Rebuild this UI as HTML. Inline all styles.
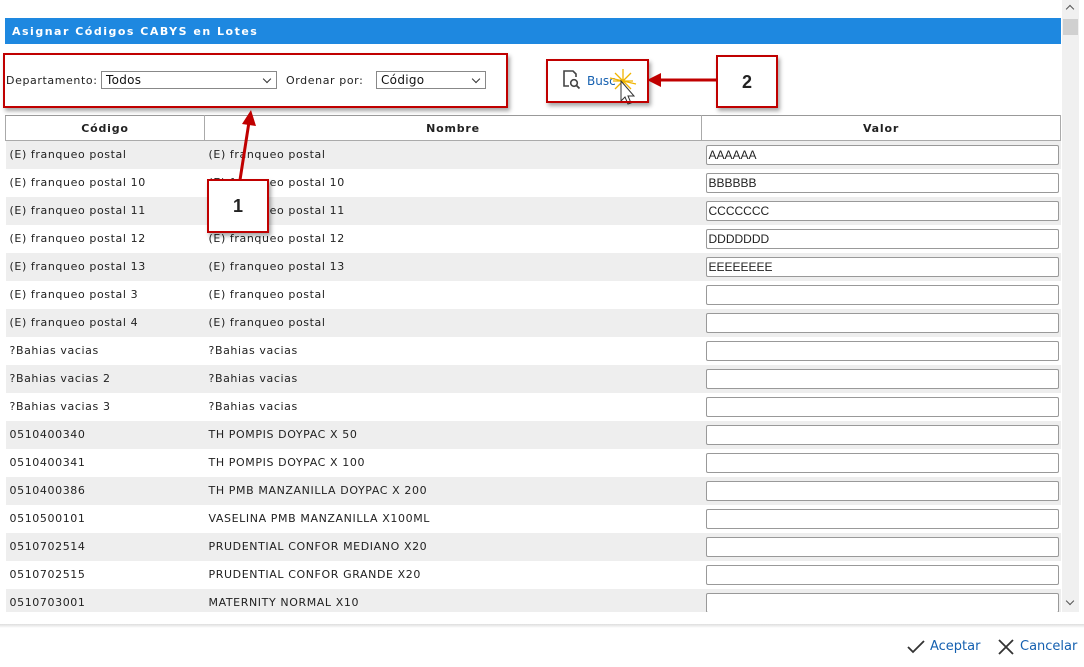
<!DOCTYPE html>
<html><head><meta charset="utf-8"><style>
body{margin:0;width:1084px;height:667px;background:#fff;font-family:"DejaVu Sans","Liberation Sans",sans-serif;font-size:11px;letter-spacing:.6px;color:#222;position:relative;overflow:hidden}
.abs{position:absolute}
.hdr{left:5px;top:18px;width:1056px;height:26px;background:#1e88e0;color:#fff;font-weight:bold;font-size:11px;letter-spacing:1.5px;line-height:27px;padding-left:7px;box-sizing:border-box}
.sel{border:1px solid #888;background:#fff;height:18px;box-sizing:border-box;font-size:12px;letter-spacing:.3px;line-height:17px;padding-left:4px;color:#111}
.sel:after{content:"";position:absolute;right:6px;top:4px;width:5px;height:5px;border-right:1.5px solid #333;border-bottom:1.5px solid #333;transform:rotate(45deg)}
table{position:absolute;left:5px;top:115px;border-collapse:collapse;width:1056px;table-layout:fixed}
th{height:24px;border:1px solid #aaa;border-top:1px solid #999;font-weight:bold;font-size:11px;letter-spacing:.8px;padding:0;background:#fff}
td{height:27px;padding:0 0 1px 4px;white-space:nowrap;overflow:hidden}
tr.g td{background:#eee}
.inp{width:353px;height:20px;border:1px solid #999;border-radius:2px;background:#fff;box-sizing:border-box;font-size:12px;letter-spacing:0;line-height:18px;padding-left:2px;font-family:"Liberation Sans",sans-serif}
.red{border:2px solid #c00000;box-shadow:2px 3px 4px rgba(0,0,0,.35);background:transparent}
.nb{background:#fff;font-family:"Liberation Sans",sans-serif;font-weight:bold;font-size:18px;text-align:center;letter-spacing:0}
</style></head><body>
<div class="abs" style="left:1062px;top:0;width:17px;height:612px;background:#f0f0f0"></div>
<div class="abs" style="left:1063px;top:19px;width:15px;height:16px;background:#d0d0d0"></div>
<div class="abs" style="left:1067px;top:6px;width:5px;height:5px;border-left:1.5px solid #555;border-top:1.5px solid #555;transform:rotate(45deg)"></div>
<div class="abs" style="left:1067px;top:598px;width:5px;height:5px;border-right:1.5px solid #555;border-bottom:1.5px solid #555;transform:rotate(45deg)"></div>
<div class="abs hdr">Asignar Códigos CABYS en Lotes</div>
<div class="abs" style="left:6px;top:74px;font-size:11px">Departamento:</div>
<div class="abs sel" style="left:101px;top:71px;width:176px">Todos</div>
<div class="abs" style="left:286px;top:74px;font-size:11px">Ordenar por:</div>
<div class="abs sel" style="left:376px;top:71px;width:110px">Código</div>
<div class="abs red" style="left:3px;top:53px;width:501px;height:51px"></div>
<svg class="abs" style="left:562px;top:69px" width="22" height="22" viewBox="0 0 22 22"><path d="M7 17H2V2h9l3 3v3" fill="none" stroke="#444" stroke-width="1.6"/><circle cx="12" cy="14" r="3.3" fill="none" stroke="#444" stroke-width="1.6"/><path d="M14.5 16.5l3 3" stroke="#444" stroke-width="1.8"/></svg>
<div class="abs" style="left:587px;top:74px;color:#1560b0;font-size:12px;letter-spacing:0">Busc</div>
<svg class="abs" style="left:605px;top:66px" width="40" height="46"><g stroke="#f0b400" stroke-width="1.3"><path d="M8 15L28 15M18 3L18 27M10 7L26 23M26 7L10 23M5 12L31 18"/></g><path d="M16 15v20l4-4 3 7 3-1-3-7 6 0z" fill="#fff" stroke="#333"/></svg>
<div class="abs red" style="left:546px;top:59px;width:99px;height:40px"></div>
<table>
<colgroup><col style="width:199px"><col style="width:497px"><col></colgroup>
<tr><th>Código</th><th>Nombre</th><th>Valor</th></tr>
<tr class="g"><td>(E) franqueo postal</td><td>(E) franqueo postal</td><td><div class="inp">AAAAAA</div></td></tr>
<tr><td>(E) franqueo postal 10</td><td>(E) franqueo postal 10</td><td><div class="inp">BBBBBB</div></td></tr>
<tr class="g"><td>(E) franqueo postal 11</td><td>(E) franqueo postal 11</td><td><div class="inp">CCCCCCC</div></td></tr>
<tr><td>(E) franqueo postal 12</td><td>(E) franqueo postal 12</td><td><div class="inp">DDDDDDD</div></td></tr>
<tr class="g"><td>(E) franqueo postal 13</td><td>(E) franqueo postal 13</td><td><div class="inp">EEEEEEEE</div></td></tr>
<tr><td>(E) franqueo postal 3</td><td>(E) franqueo postal</td><td><div class="inp"></div></td></tr>
<tr class="g"><td>(E) franqueo postal 4</td><td>(E) franqueo postal</td><td><div class="inp"></div></td></tr>
<tr><td>?Bahias vacias</td><td>?Bahias vacias</td><td><div class="inp"></div></td></tr>
<tr class="g"><td>?Bahias vacias 2</td><td>?Bahias vacias</td><td><div class="inp"></div></td></tr>
<tr><td>?Bahias vacias 3</td><td>?Bahias vacias</td><td><div class="inp"></div></td></tr>
<tr class="g"><td>0510400340</td><td>TH POMPIS DOYPAC X 50</td><td><div class="inp"></div></td></tr>
<tr><td>0510400341</td><td>TH POMPIS DOYPAC X 100</td><td><div class="inp"></div></td></tr>
<tr class="g"><td>0510400386</td><td>TH PMB MANZANILLA DOYPAC X 200</td><td><div class="inp"></div></td></tr>
<tr><td>0510500101</td><td>VASELINA PMB MANZANILLA X100ML</td><td><div class="inp"></div></td></tr>
<tr class="g"><td>0510702514</td><td>PRUDENTIAL CONFOR MEDIANO X20</td><td><div class="inp"></div></td></tr>
<tr><td>0510702515</td><td>PRUDENTIAL CONFOR GRANDE X20</td><td><div class="inp"></div></td></tr>
<tr class="g"><td>0510703001</td><td>MATERNITY NORMAL X10</td><td><div class="inp"></div></td></tr>
</table>
<div class="abs" style="left:0;top:612px;width:1084px;height:55px;background:#fff"></div>
<div class="abs" style="left:0;top:624px;width:1084px;height:4px;background:linear-gradient(#ddd,#fff)"></div>
<svg class="abs" style="left:906px;top:639px" width="20" height="16"><path d="M2 8l5 5 11-11" fill="none" stroke="#333" stroke-width="1.8"/></svg>
<div class="abs" style="left:930px;top:639px;color:#1560b0;font-size:13px;letter-spacing:0">Aceptar</div>
<svg class="abs" style="left:997px;top:638px" width="18" height="18"><path d="M2 2l14 14M16 2L2 16" stroke="#333" stroke-width="1.8"/></svg>
<div class="abs" style="left:1020px;top:639px;color:#1560b0;font-size:13px;letter-spacing:0">Cancelar</div>
<svg class="abs" style="left:0;top:0" width="1084" height="667" pointer-events="none"><path d="M240 180L249 122" stroke="#c00000" stroke-width="3"/><path d="M251 110l-9 14 14 2z" fill="#c00000"/><path d="M716 80L660 80" stroke="#c00000" stroke-width="3"/><path d="M647 80l14-7v14z" fill="#c00000"/></svg>
<div class="abs red nb" style="left:207px;top:179px;width:58px;height:50px;background:#fff;line-height:50px">1</div>
<div class="abs red nb" style="left:716px;top:55px;width:58px;height:49px;background:#fff;line-height:50px">2</div>
</body></html>
